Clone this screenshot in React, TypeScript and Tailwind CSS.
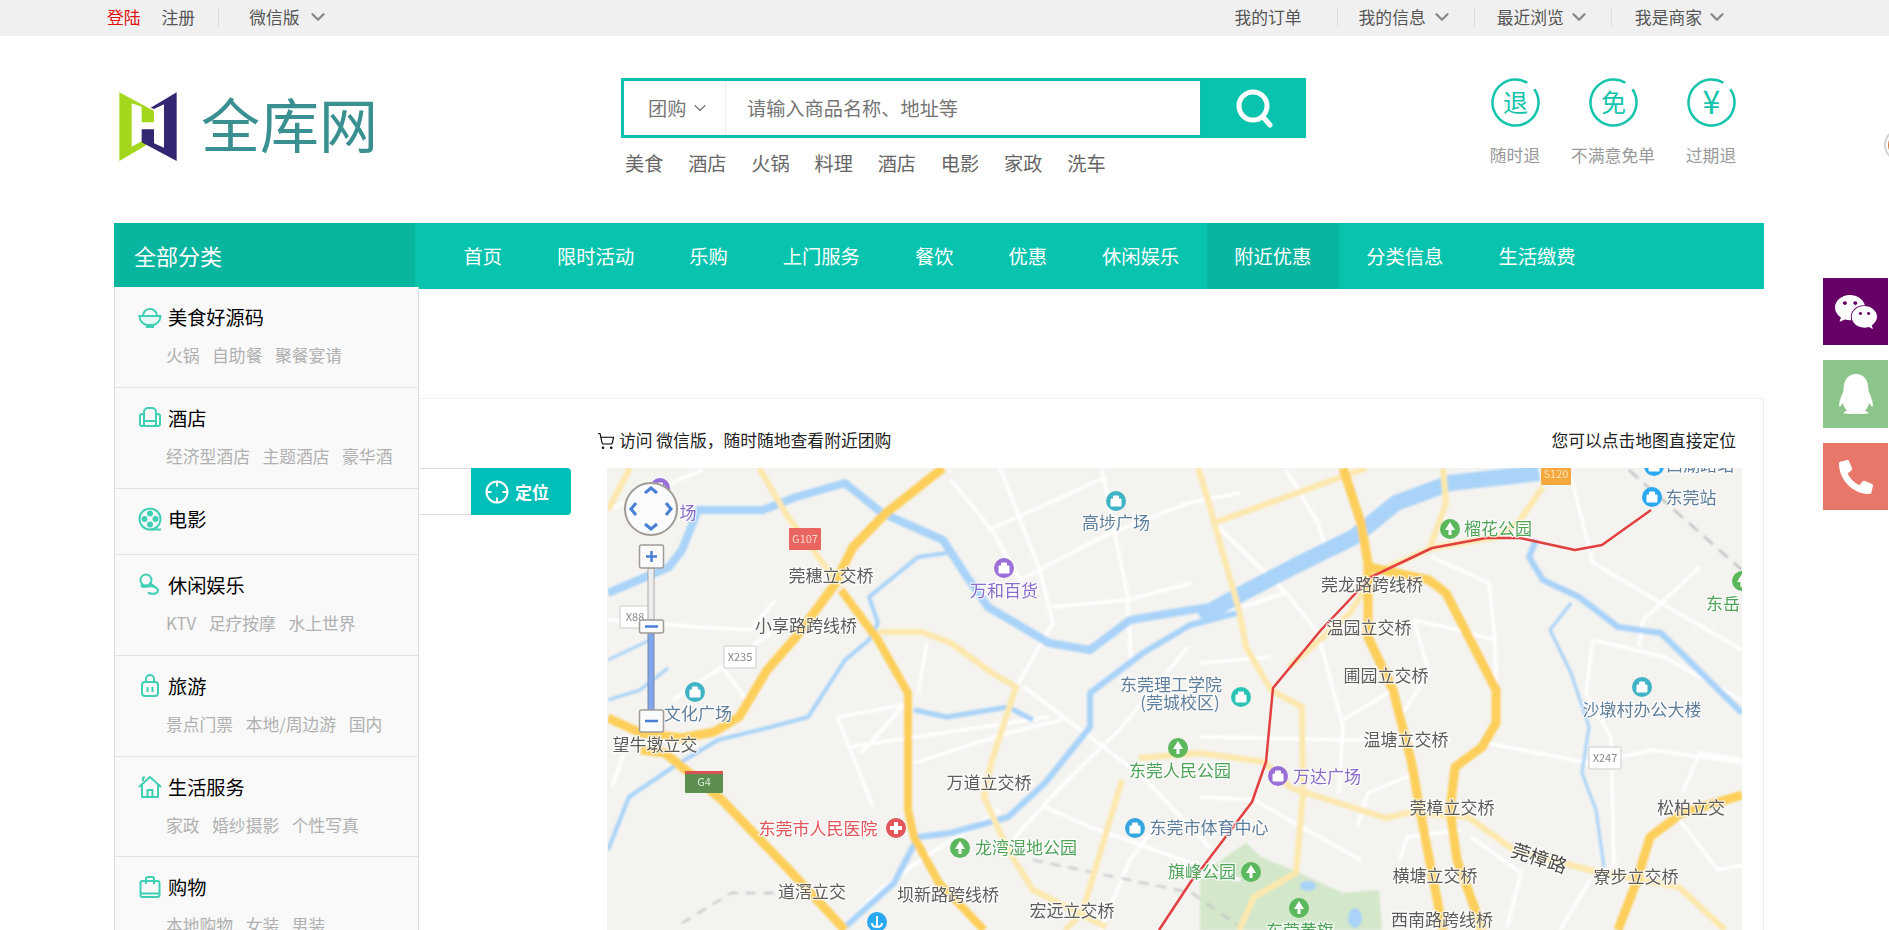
import { ChevronDown, ShoppingCart } from 'lucide-react';
import { FaWeixin, FaQq, FaPhoneAlt } from 'react-icons/fa';

const HOT_LINKS = ['美食', '酒店', '火锅', '料理', '酒店', '电影', '家政', '洗车'];
const NAV_ITEMS = ['首页', '限时活动', '乐购', '上门服务', '餐饮', '优惠', '休闲娱乐', '附近优惠', '分类信息', '生活缴费'];

const GUARANTEES = [
  { glyph: '退', label: '随时退', size: 25, y: 33.5 },
  { glyph: '免', label: '不满意免单', size: 25, y: 33.5 },
  { glyph: '¥', label: '过期退', size: 32, y: 36 },
];

function BowlIcon() {
  return (
    <svg viewBox="0 0 24 24" className="w-6 h-6" fill="none" stroke="#3fcfb4" strokeWidth="2">
      <path d="M1.5 11h21c0 5-4 8-7 9H8.500c-3-1-7-4-7-9z" fill="#e6f8f4" />
      <path d="M5 10c1-4 4-6 7-6s6 2 7 6" />
      <path d="M8 22h8" />
    </svg>
  );
}

function SofaIcon() {
  return (
    <svg viewBox="0 0 24 24" className="w-6 h-6" fill="none" stroke="#3fcfb4" strokeWidth="2" strokeLinejoin="round">
      <path d="M6 10V6a4 4 0 0 1 4-4h4a4 4 0 0 1 4 4v4" />
      <path d="M2 10a2 2 0 0 1 4 0v5h12v-5a2 2 0 0 1 4 0v8a2 2 0 0 1-2 2H4a2 2 0 0 1-2-2z" />
      <path d="M6 15v5M18 15v5" />
    </svg>
  );
}

function FilmIcon() {
  return (
    <svg viewBox="0 0 24 24" className="w-6 h-6" fill="none" stroke="#3fcfb4" strokeWidth="2">
      <circle cx="12" cy="12" r="10.500" />
      <circle cx="12" cy="6.500" r="2" fill="#3fcfb4" />
      <circle cx="12" cy="17.500" r="2" fill="#3fcfb4" />
      <circle cx="6.500" cy="12" r="2" fill="#3fcfb4" />
      <circle cx="17.500" cy="12" r="2" fill="#3fcfb4" />
      <path d="M13 22.500h10" />
    </svg>
  );
}

function MicIcon() {
  return (
    <svg viewBox="0 0 24 24" className="w-6 h-6" fill="none" stroke="#3fcfb4" strokeWidth="2" strokeLinecap="round">
      <circle cx="8" cy="7" r="5.500" />
      <path d="M4 11l-.500 2 2 1 8-1 3 1c3 1 5 3 2 6-2 1-5 1-8 0" />
      <path d="M12 10l6 5" />
    </svg>
  );
}

function LuggageIcon() {
  return (
    <svg viewBox="0 0 24 24" className="w-6 h-6" fill="none" stroke="#3fcfb4" strokeWidth="2">
      <rect x="4" y="8" width="16" height="14" rx="3" />
      <path d="M8 8V5a4 4 0 0 1 8 0v3" />
      <path d="M9.500 13v5M14.500 13v5" />
    </svg>
  );
}

function HomeIcon() {
  return (
    <svg viewBox="0 0 24 24" className="w-6 h-6" fill="none" stroke="#3fcfb4" strokeWidth="2" strokeLinejoin="round">
      <path d="M1 12L12 2l11 10" />
      <path d="M4 10v12h16V10" />
      <path d="M9.500 22v-7h5v7" />
      <path d="M5 6V2.500h2" />
    </svg>
  );
}

function BagIcon() {
  return (
    <svg viewBox="0 0 24 24" className="w-6 h-6" fill="none" stroke="#3fcfb4" strokeWidth="2">
      <rect x="2.500" y="6" width="19" height="16" rx="2" />
      <path d="M8 9V4a2 2 0 0 1 2-2h4a2 2 0 0 1 2 2v5" />
      <path d="M3 18.500h18" />
    </svg>
  );
}

const CATEGORIES = [
  { title: '美食好源码', subs: ['火锅', '自助餐', '聚餐宴请'], icon: <BowlIcon />, h: 'h-[101px]' },
  { title: '酒店', subs: ['经济型酒店', '主题酒店', '豪华酒店'], icon: <SofaIcon />, h: 'h-[101px]' },
  { title: '电影', subs: [], icon: <FilmIcon />, h: 'h-[66px]' },
  { title: '休闲娱乐', subs: ['KTV', '足疗按摩', '水上世界'], icon: <MicIcon />, h: 'h-[101px]' },
  { title: '旅游', subs: ['景点门票', '本地/周边游', '国内'], icon: <LuggageIcon />, h: 'h-[101px]' },
  { title: '生活服务', subs: ['家政', '婚纱摄影', '个性写真'], icon: <HomeIcon />, h: 'h-[100px]' },
  { title: '购物', subs: ['本地购物', '女装', '男装'], icon: <BagIcon />, h: 'h-[101px]' },
];

// map lines, in page coordinates (the svg viewBox starts at the map's corner)
const WHITE_ROADS = [
  '1000,468 1024,530 1039,567 1053,623 1016,687',
  '951,480 992,530 1020,580',
  '988,530 1049,503 1106,477',
  '1020,580 1102,537 1188,503 1240,493',
  '1102,470 1127,593 1131,660',
  '1053,607 1127,600 1192,583',
  '1024,687 1090,737 1143,777 1212,850',
  '1188,647 1122,727 1061,787 1012,840',
  '837,717 904,705 861,753',
  '837,717 853,757 873,807',
  '849,747 1049,717',
  '914,763 1008,733 1061,720',
  '608,510 702,470',
  '608,620 698,627 751,630 775,600',
  '722,667 747,700',
  '673,700 722,667 771,633',
  '927,643 918,693',
  '612,787 624,753',
  '1045,807 1090,827 1240,880',
  '1593,640 1586,693 1611,737 1614,867',
  '1593,640 1664,657 1742,700',
  '1486,743 1589,763 1654,750 1742,763',
  '1700,567 1643,620 1639,647',
  '1571,477 1593,563 1661,603 1742,650',
  '1432,557 1489,583 1495,640 1496,687',
  '1414,620 1457,630 1496,640',
  '1414,620 1429,673 1400,717',
  '1318,633 1343,727 1339,793',
  '1200,663 1271,657',
  '1200,737 1364,740 1450,740',
  '1343,720 1393,690',
  '1357,827 1368,793 1411,775',
  '1471,837 1521,873 1507,927',
  '1200,797 1254,800 1307,830 1361,860',
  '1682,793 1700,753 1742,760',
  '1678,818 1718,870 1742,865',
  '1400,860 1407,837 1461,830',
  '1214,523 1286,593 1318,633',
  '1286,470 1318,523 1329,560',
  '1286,593 1200,620',
  '840,930 880,890 920,860 1000,810',
  '1100,930 1130,860 1160,820',
  '1560,930 1590,880',
];

const RIVERS = [
  { pts: '1539,473 1450,483 1396,503 1354,537 1293,567 1243,593 1200,617', w: 16 },
  { pts: '1240,603 1190,610 1130,620 1090,650 1049,643 988,607 967,577 943,540 882,513 845,483 796,497 763,510 698,510 682,550 669,567 608,593', w: 8 },
  { pts: '1240,612 1190,625 1143,653 1090,693 1090,727 1045,783 1008,817 951,833 918,837 894,883 845,927', w: 6 },
  { pts: '608,850 629,797 673,767 718,740 771,727 808,717 845,660 869,640 878,623 869,597 918,557 947,553', w: 4 },
  { pts: '914,710 947,717 1008,707 1033,720', w: 5 },
  { pts: '1536,540 1529,557 1543,580 1579,597 1618,627 1661,633 1742,713', w: 6 },
  { pts: '1571,603 1550,630 1571,673 1589,727 1582,773 1596,810 1604,867', w: 3 },
  { pts: '608,660 650,640', w: 3 },
  { pts: '608,700 640,690 668,668', w: 3 },
];

const LIGHT_ROADS = [
  '759,468 788,517 841,587',
  '878,632 922,632 951,643 992,673 1016,687 992,760 984,797 1008,850 1033,890 1106,927',
  '1198,468 1208,500 1221,547 1239,610 1246,647 1271,690 1302,707 1303,793 1296,873 1254,897 1239,930',
  '1122,780 1082,913 1065,930',
  '1139,758 1200,753 1264,762 1291,788 1386,818 1407,813 1468,817 1514,850 1589,870 1679,887 1725,930',
  '1214,523 1366,468',
  '1443,468 1446,503 1429,550',
  '1543,487 1518,523 1496,537 1432,548 1375,573 1350,613 1289,667',
  '608,510 630,468',
];

const HIGHWAYS = [
  { pts: '943,468 886,513 853,547 833,587 796,637 767,670 739,717 714,732 682,738 641,733 608,718', w: 9 },
  { pts: '841,590 878,640 908,693 908,810 914,837 939,883 984,930', w: 8 },
  { pts: '641,750 665,753 722,800 792,873 845,930', w: 9 },
  { pts: '1343,468 1361,523 1368,563 1368,637 1393,690 1411,760 1425,837 1443,930', w: 9 },
  { pts: '1368,567 1429,580 1446,593 1496,690 1496,723 1482,747 1455,767 1450,810 1457,860 1479,920 1482,930', w: 9 },
  { pts: '1742,795 1682,813 1650,837 1636,883 1618,930', w: 9 },
];

const RED_LINE = '1651,510 1602,545 1575,550 1520,538 1486,538 1432,548 1371,577 1321,630 1273,688 1266,762 1252,802 1221,843 1202,868 1192,880 1159,930';

const GRAY = '#5c5c5c';
const BLUE = '#5f7f9c';
const GREEN = '#4fa35a';
const PURPLE = '#8a6bcb';

const MAP_LABELS: [string, number, number, string][] = [
  ['高埗广场', 1116, 523, BLUE],
  ['万和百货', 1004, 591, PURPLE],
  ['莞穗立交桥', 831, 576, GRAY],
  ['小享路跨线桥', 806, 626, GRAY],
  ['文化广场', 698, 714, BLUE],
  ['场', 688, 513, PURPLE],
  ['望牛墩立交', 655, 745, GRAY],
  ['万道立交桥', 989, 783, GRAY],
  ['东莞市人民医院', 818, 829, '#e2555a'],
  ['龙湾湿地公园', 1026, 848, GREEN],
  ['道滘立交', 812, 892, GRAY],
  ['坝新路跨线桥', 948, 895, GRAY],
  ['宏远立交桥', 1072, 911, GRAY],
  ['东莞理工学院', 1171, 685, BLUE],
  ['(莞城校区)', 1180, 703, BLUE],
  ['东莞人民公园', 1180, 771, GREEN],
  ['东莞市体育中心', 1209, 828, BLUE],
  ['旗峰公园', 1202, 872, GREEN],
  ['东莞黄旗', 1300, 931, GREEN],
  ['榴花公园', 1498, 529, GREEN],
  ['东莞站', 1691, 498, BLUE],
  ['莞龙路跨线桥', 1372, 585, GRAY],
  ['温园立交桥', 1369, 628, GRAY],
  ['圃园立交桥', 1386, 676, GRAY],
  ['温塘立交桥', 1406, 740, GRAY],
  ['万达广场', 1327, 777, PURPLE],
  ['莞樟立交桥', 1452, 808, GRAY],
  ['横塘立交桥', 1435, 876, GRAY],
  ['寮步立交桥', 1636, 877, GRAY],
  ['西南路跨线桥', 1442, 920, GRAY],
  ['松柏立交', 1691, 808, GRAY],
  ['沙墩村办公大楼', 1642, 710, BLUE],
  ['东岳', 1723, 604, GREEN],
  ['西湖路站', 1700, 465, BLUE],
];

const MAP_POIS: [number, number, string, string][] = [
  [896, 828, '#e2555a', 'cross'],
  [960, 848, '#5bb85b', 'tree'],
  [1178, 748, '#5bb85b', 'tree'],
  [1251, 872, '#5bb85b', 'tree'],
  [1299, 908, '#5bb85b', 'tree'],
  [1450, 529, '#5bb85b', 'tree'],
  [1742, 581, '#5bb85b', 'tree'],
  [1116, 501, '#3fb4c6', 'bag'],
  [695, 692, '#3fb4c6', 'bag'],
  [1642, 687, '#3fb4c6', 'bag'],
  [1004, 568, '#9a6fd8', 'bag'],
  [1278, 776, '#9a6fd8', 'bag'],
  [660, 488, '#9a6fd8', 'bag'],
  [1135, 828, '#36a6df', 'bag'],
  [1652, 497, '#29a9f2', 'bag'],
  [1654, 466, '#29a9f2', 'bag'],
  [877, 922, '#29a9f2', 'anchor'],
  [1241, 697, '#2cc4b4', 'bag'],
];

function Poi({ x, y, color, kind }: { x: number; y: number; color: string; kind: string }) {
  return (
    <g transform={`translate(${x} ${y})`}>
      <circle r="10" fill={color} />
      {kind === 'cross' && <path d="M-2-6h4v4h4v4h-4v4h-4v-4h-4v-4h4z" fill="#fff" />}
      {kind === 'tree' && <path d="M0-7l5 8h-3.500v5h-3v-5H-5z" fill="#fff" />}
      {kind === 'bag' && <path d="M-5-2h10v7H-5zM-2.500-2v-3h5v3" fill="#fff" stroke="#fff" strokeWidth="1" />}
      {kind === 'anchor' && <path d="M0-6v11M-5 1c0 3 2 4 5 4s5-1 5-4" fill="none" stroke="#fff" strokeWidth="2" />}
    </g>
  );
}

function Shield({ x, y, w, text, bg, fg, border }: { x: number; y: number; w: number; text: string; bg: string; fg: string; border?: string }) {
  return (
    <g>
      <rect x={x - w / 2} y={y - 11} width={w} height="22" rx="1" fill={bg} stroke={border ?? 'none'} />
      <text x={x} y={y + 4} textAnchor="middle" fontSize="11" fill={fg}>
        {text}
      </text>
    </g>
  );
}

function MapCanvas() {
  return (
    <svg viewBox="607 468 1135 462" className="w-[1135px] h-[462px] block bg-[#f4f3f0]">
      <defs>
        <filter id="soft" x="0" y="0" width="100%" height="100%">
          <feGaussianBlur stdDeviation="0.8" />
        </filter>
        <filter id="softText" x="-5%" y="-5%" width="110%" height="110%">
          <feGaussianBlur stdDeviation="0.35" />
        </filter>
      </defs>
      <g filter="url(#soft)">
        <path d="M1200 930V880l21-20 25-17 15 14 32 13 50 23 36-3 3 40z" fill="#d3e7ca" />
        <ellipse cx="1308" cy="886" rx="8" ry="5" fill="#a9d3f8" />
        <ellipse cx="1355" cy="918" rx="7" ry="10" fill="#a9d3f8" />
        {WHITE_ROADS.map((pts) => (
          <polyline key={pts} points={pts} fill="none" stroke="#fff" strokeWidth="3.500" strokeLinejoin="round" />
        ))}
        <polyline points="1629,470 1682,517 1742,570" fill="none" stroke="#b5b5b5" strokeWidth="2" strokeDasharray="12 8" />
        <polyline points="1033,860 1192,893 1240,927" fill="none" stroke="#c4c4c4" strokeWidth="2" strokeDasharray="10 8" />
        <polyline points="682,923 731,893 775,893" fill="none" stroke="#c4c4c4" strokeWidth="2" strokeDasharray="10 8" />
        {RIVERS.map((r) => (
          <polyline key={r.pts} points={r.pts} fill="none" stroke="#a9d3f8" strokeWidth={r.w} strokeLinejoin="round" />
        ))}
        {LIGHT_ROADS.map((pts) => (
          <polyline key={pts} points={pts} fill="none" stroke="#fde8ad" strokeWidth="6" strokeLinejoin="round" />
        ))}
        {HIGHWAYS.map((r) => (
          <polyline key={r.pts} points={r.pts} fill="none" stroke="#fdcf5a" strokeWidth={r.w} strokeLinejoin="round" />
        ))}
      </g>

      <g filter="url(#softText)">
        <polyline points={RED_LINE} fill="none" stroke="#e24040" strokeWidth="2.500" strokeLinejoin="round" />
        <Shield x={805} y={539} w={32} text="G107" bg="#e8665f" fg="#fbd5d0" />
        <Shield x={704} y={782} w={38} text="G4" bg="#5b8f4f" fg="#d9ecd5" />
        <rect x="685" y="771" width="38" height="3" fill="#d9534f" />
        <Shield x={740} y={657} w={32} text="X235" bg="#fff" fg="#888" border="#ccc" />
        <Shield x={635} y={617} w={30} text="X88" bg="#fff" fg="#888" border="#ccc" />
        <Shield x={1605} y={758} w={32} text="X247" bg="#fff" fg="#888" border="#ccc" />
        <Shield x={1556} y={474} w={30} text="S120" bg="#f4a83c" fg="#fde3b5" />

        {MAP_POIS.map(([x, y, color, kind]) => (
          <Poi key={`${x}-${y}`} x={x} y={y} color={color} kind={kind} />
        ))}
        {MAP_LABELS.map(([text, x, y, color]) => (
          <text
            key={text}
            x={x}
            y={y + 6}
            textAnchor="middle"
            fontSize="17"
            fill={color}
            stroke="#fff"
            strokeWidth="2.500"
            strokeOpacity="0.7"
            paintOrder="stroke"
          >
            {text}
          </text>
        ))}
        <text
          x={1539}
          y={865}
          textAnchor="middle"
          fontSize="19"
          fill="#4a4a4a"
          stroke="#fff"
          strokeWidth="2.500"
          strokeOpacity="0.7"
          paintOrder="stroke"
          transform="rotate(18 1539 859)"
        >
          莞樟路
        </text>
      </g>

      {/* pan and zoom controls */}
      <circle cx="651" cy="509" r="26" fill="#fafbfd" stroke="#a09c95" strokeWidth="2" />
      <g fill="none" stroke="#4a7fd6" strokeWidth="3">
        <path d="M645 493l6-5 6 5" />
        <path d="M645 524l6 5 6-5" />
        <path d="M636 503l-5 6 5 6" />
        <path d="M666 503l5 6-5 6" />
      </g>
      <rect x="648" y="568" width="6" height="52" fill="#eee" stroke="#aaa" />
      <rect x="648" y="633" width="6" height="78" fill="#7fa5ea" stroke="#7a8ba8" />
      <g fill="#fbfbfb" stroke="#a09c95" strokeWidth="1.500">
        <rect x="639.500" y="545" width="24" height="23" rx="2" />
        <rect x="639.500" y="620" width="24" height="13" rx="2" />
        <rect x="639.500" y="710" width="24" height="22" rx="2" />
      </g>
      <g fill="none" stroke="#4a7fd6" strokeWidth="2.500">
        <path d="M646 556.500h11M651.500 551v11" />
        <path d="M645 626.500h13" />
        <path d="M645 721h13" />
      </g>
    </svg>
  );
}

function GuaranteeBadge({ glyph, size, y }: { glyph: string; size: number; y: number }) {
  return (
    <svg viewBox="0 0 49 49" className="w-[49px] h-[49px]">
      <circle
        cx="24.500"
        cy="24.500"
        r="23"
        fill="none"
        stroke="#14c4ac"
        strokeWidth="2.500"
        strokeDasharray="134 10.500"
        transform="rotate(-35 24.500 24.500)"
      />
      <text x="24.500" y={y} textAnchor="middle" fontSize={size} fill="#14c4ac">
        {glyph}
      </text>
    </svg>
  );
}

export default function App() {
  return (
    <div className="relative w-full h-[930px] overflow-hidden bg-white text-[#333] font-['Noto_Sans_CJK_SC',sans-serif]">
      {/* top bar */}
      <div className="h-9 pb-[2px] bg-[#f0f0f0] flex items-center justify-between text-[16.8px] leading-5 text-[#555]">
        <div className="flex items-center ml-[107px]">
          <span className="text-[#e01010]">登陆</span>
          <span className="ml-[21px]">注册</span>
          <span className="ml-[23px] w-px h-5 bg-[#ddd]" />
          <span className="ml-[30px]">微信版</span>
          <ChevronDown className="ml-[7px] w-[22px] h-[22px] text-[#888]" strokeWidth={2.500} />
        </div>
        <div className="flex items-center mr-[161px]">
          <span>我的订单</span>
          <span className="ml-[35px] w-px h-5 bg-[#ddd]" />
          <span className="ml-[21px]">我的信息</span>
          <ChevronDown className="ml-[5px] w-[22px] h-[22px] text-[#888]" strokeWidth={2.500} />
          <span className="ml-[21px] w-px h-5 bg-[#ddd]" />
          <span className="ml-[22px]">最近浏览</span>
          <ChevronDown className="ml-[4px] w-[22px] h-[22px] text-[#888]" strokeWidth={2.500} />
          <span className="ml-[21px] w-px h-5 bg-[#ddd]" />
          <span className="ml-[23px]">我是商家</span>
          <ChevronDown className="ml-[4px] w-[22px] h-[22px] text-[#888]" strokeWidth={2.500} />
        </div>
      </div>

      {/* logo, search, guarantees */}
      <div className="h-[187px] flex items-start">
        <div className="ml-[110px] w-[511px] shrink-0 flex items-start mt-[49px]">
          <svg viewBox="0 0 240 255" className="w-20 h-[85px] shrink-0">
            <path d="M28 22L132 78V112H95V65L65 55V185L112 160 124 172 28 228Z" fill="#a4d61c" />
            <path d="M200 22V228L95 172V133H132V175L162 188V58L132 72 122 68Z" fill="#352673" />
          </svg>
          <span className="ml-[11px] mt-[2px] text-[59px] leading-[72px] text-[#3a9090] whitespace-nowrap">全库网</span>
        </div>
        <div className="w-[685px] shrink-0 mt-[42px]">
          <div className="flex h-[60px]">
            <div className="w-[582px] flex border-[3px] border-[#0cc0ad] text-[19.2px]">
              <div className="w-[102px] flex items-center pl-6 border-r border-[#eee] text-[#777]">
                团购
                <ChevronDown className="ml-1 w-5 h-5" strokeWidth={1.500} />
              </div>
              <input
                className="flex-1 min-w-0 pl-[21px] outline-none placeholder:text-[#757575]"
                placeholder="请输入商品名称、地址等"
              />
            </div>
            <div className="w-[103px] bg-[#08c4ae] flex items-center justify-center">
              <svg viewBox="0 0 40 40" className="w-10 h-10" fill="none" stroke="#fff" strokeWidth="5">
                <circle cx="18" cy="18" r="14" />
                <path d="M28 29l7 8" strokeLinecap="round" />
              </svg>
            </div>
          </div>
          <div className="ml-1 mt-[15px] flex gap-[24.800px] text-[19.2px] leading-5 text-[#666]">
            {HOT_LINKS.map((link, idx) => (
              <span key={idx}>{link}</span>
            ))}
          </div>
        </div>
        <div className="ml-[160px] mt-[42px] flex">
          {GUARANTEES.map((g) => (
            <div key={g.label} className="w-[98px] flex flex-col items-center">
              <GuaranteeBadge glyph={g.glyph} size={g.size} y={g.y} />
              <span className="mt-[18px] text-[16.8px] leading-5 text-[#999] whitespace-nowrap">{g.label}</span>
            </div>
          ))}
        </div>
      </div>

      {/* nav and the category menu over it */}
      <div className="relative ml-[114px] w-[1650px]">
        <div className="h-[66px] bg-[#08c4ae] flex text-[19.3px] text-white">
          <div className="w-[301px] h-16 bg-[#08b59f] flex items-center pl-5 text-[22px]">全部分类</div>
          <div className="ml-[21px] flex">
            {NAV_ITEMS.map((item) => (
              <div
                key={item}
                className={`px-[27.500px] flex items-center ${item === '附近优惠' ? 'bg-[#07b5a1]' : ''}`}
              >
                {item}
              </div>
            ))}
          </div>
        </div>

        <div className="absolute z-10 left-0 top-16 w-[305px] border-x border-[#ddd] bg-[#f9f9f9]">
          {CATEGORIES.map((cat) => (
            <div key={cat.title} className={`${cat.h} border-b border-[#e2e2e2] pl-[23px] pt-5`}>
              <div className="flex items-center h-5">
                <span className="w-6 h-6 shrink-0">{cat.icon}</span>
                <span className="ml-[6px] text-[19.2px] text-black leading-5">{cat.title}</span>
              </div>
              {cat.subs.length > 0 && (
                <div className="mt-4 ml-7 w-[226.500px] overflow-hidden flex gap-[12.500px] whitespace-nowrap text-[16.8px] leading-6 text-[#b0b0b0]">
                  {cat.subs.map((sub) => (
                    <span key={sub}>{sub}</span>
                  ))}
                </div>
              )}
            </div>
          ))}
        </div>

        {/* main panel */}
        <div className="mt-[109px] h-[600px] border border-[#eee] flex">
          <div className="w-[482px] shrink-0 pt-[69px] pl-[300px] pr-[26px]">
            <div className="flex h-[47px]">
              <div className="flex-1 border-y border-[#ddd]" />
              <div className="w-[100px] rounded-r bg-[#00bfb8] flex items-center pl-[14px] gap-[6px] text-white">
                <svg viewBox="0 0 24 24" className="w-6 h-6" fill="none" stroke="#fff" strokeWidth="2">
                  <circle cx="12" cy="12" r="10.500" />
                  <path d="M12 1.500v5M12 17.500v5M1.500 12h5M17.500 12h5" />
                </svg>
                <span className="text-[17px] font-bold leading-5">定位</span>
              </div>
            </div>
          </div>
          <div className="w-[1145px] shrink-0">
            <div className="h-[69px] pt-[15px] pr-[6px] flex justify-between items-center text-[16.8px] text-[#222]">
              <div className="flex items-center">
                <ShoppingCart className="w-[18px] h-[18px] text-black" strokeWidth={1.500} />
                <span className="ml-1">访问 微信版，随时随地查看附近团购</span>
              </div>
              <span>您可以点击地图直接定位</span>
            </div>
            <div className="ml-[10px]">
              <MapCanvas />
            </div>
          </div>
        </div>
      </div>

      {/* floating contact buttons */}
      <div className="absolute left-[1823px] top-[278px] w-[65px] flex flex-col">
        <div className="h-[67px] bg-[#660066] flex items-center justify-center text-white">
          <FaWeixin size={44} />
        </div>
        <div className="mt-[15px] h-[68px] bg-[#8bc58b] flex items-center justify-center text-white">
          <FaQq size={40} />
        </div>
        <div className="mt-[15px] h-[67px] bg-[#e8776a] flex items-center justify-center text-white">
          <FaPhoneAlt size={34} />
        </div>
      </div>

      <div className="absolute left-[1884px] top-[128px] w-[34px] h-[34px] rounded-full border-2 border-[#d5d5d5] bg-white p-[2px]">
        <div className="w-full h-full rounded-full bg-[#c8743a]" />
      </div>
    </div>
  );
}
